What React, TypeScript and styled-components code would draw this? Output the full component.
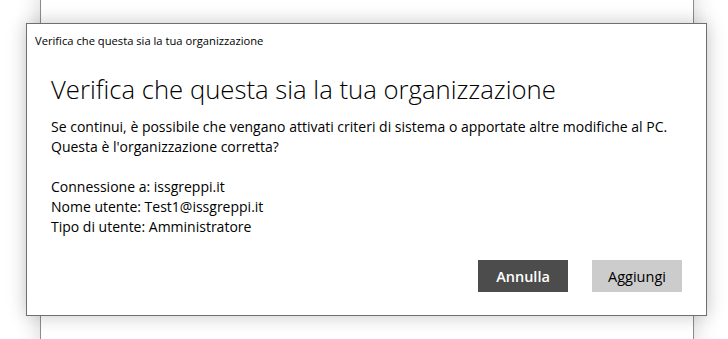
import styled, { createGlobalStyle } from "styled-components";

const GlobalStyle = createGlobalStyle`
  html, body {
    margin: 0;
    padding: 0;
    background: #ffffff;
  }
  body {
    font-family: "Open Sans", "Noto Sans", "Liberation Sans", sans-serif;
    color: #000;
  }
`;

const Stage = styled.div`
  position: relative;
  width: 728px;
  height: 339px;
  overflow: hidden;
  background: #ffffff;
  padding: 23px 0 0 26px;
  box-sizing: border-box;
`;

// the window behind the dialog
const BackWindow = styled.div`
  position: absolute;
  left: 40px;
  top: -20px;
  width: 652px;
  height: 380px;
  background: #ffffff;
  border-left: 1px solid #8c8c8c;
  border-right: 1px solid #8c8c8c;
  box-shadow: 0 0 22px rgba(0, 0, 0, 0.16);
`;

const Dialog = styled.div`
  position: relative;
  width: 679px;
  height: 291px;
  background: #ffffff;
  border: 1px solid #6f6f6f;
  box-shadow: 0 0 18px rgba(0, 0, 0, 0.22);
  display: flex;
  flex-direction: column;
`;

const TitleBar = styled.div`
  height: 32px;
  display: flex;
  align-items: center;
  padding-left: 8px;
  font-size: 11.2px;
`;

const Content = styled.div`
  padding: 0 24px;
  display: flex;
  flex-direction: column;
`;

const Heading = styled.h1`
  margin: 17px 0 0;
  font-size: 25.7px;
  line-height: 34px;
  font-weight: 300;
`;

const Body = styled.div`
  margin-top: 10px;
  font-size: 14px;
  line-height: 20px;
`;

const Line = styled.div<{ $gapBefore?: boolean }>`
  margin-top: ${(p) => (p.$gapBefore ? "20px" : "0")};
`;

const ButtonRow = styled.div`
  margin-top: auto;
  padding: 0 24px 23px;
  display: flex;
  justify-content: flex-end;
  gap: 24px;
`;

const Button = styled.button<{ $primary?: boolean }>`
  width: 90px;
  height: 32px;
  border: none;
  margin: 0;
  padding: 0;
  font-family: inherit;
  font-size: 14.5px;
  font-weight: ${(p) => (p.$primary ? 600 : 400)};
  color: ${(p) => (p.$primary ? "#ffffff" : "#000000")};
  background: ${(p) => (p.$primary ? "#4c4c4c" : "#cccccc")};
`;

export default function App() {
  return (
    <>
      <GlobalStyle />
      <Stage>
        <BackWindow />
        <Dialog>
          <TitleBar>Verifica che questa sia la tua organizzazione</TitleBar>
          <Content>
            <Heading>Verifica che questa sia la tua organizzazione</Heading>
            <Body>
              <Line>
                Se continui, è possibile che vengano attivati criteri di sistema o apportate altre modifiche al PC.
              </Line>
              <Line>Questa è l'organizzazione corretta?</Line>
              <Line $gapBefore>Connessione a: issgreppi.it</Line>
              <Line>Nome utente: Test1@issgreppi.it</Line>
              <Line>Tipo di utente: Amministratore</Line>
            </Body>
          </Content>
          <ButtonRow>
            <Button $primary>Annulla</Button>
            <Button>Aggiungi</Button>
          </ButtonRow>
        </Dialog>
      </Stage>
    </>
  );
}
